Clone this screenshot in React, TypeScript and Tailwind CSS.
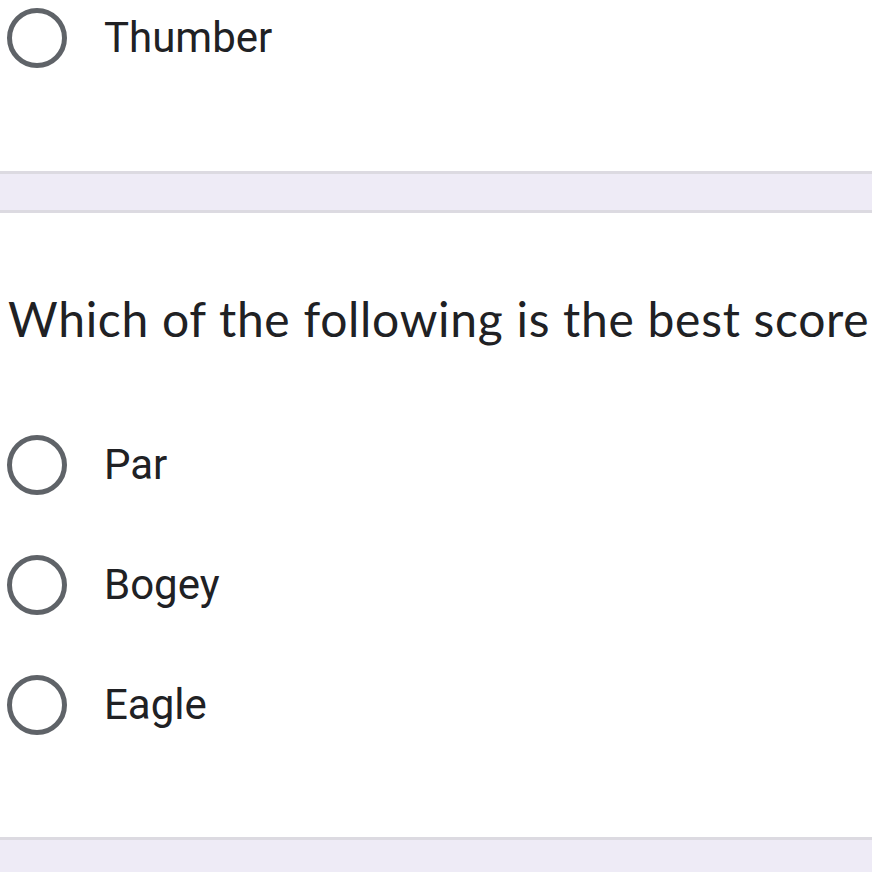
import { ReactNode } from 'react'

// Google Forms style multiple choice, cropped view

function Radio() {
  return (
    <span className="block w-[60px] h-[60px] shrink-0 rounded-full border-[5px] border-[#5f6368]" />
  )
}

function Option({ label }: { label: string }) {
  return (
    <div className="flex items-center h-[60px]">
      <div className="pl-[7px]">
        <Radio />
      </div>
      <span className="ml-[37px] text-[42px] leading-none text-[#202124] font-['Roboto',sans-serif]">
        {label}
      </span>
    </div>
  )
}

function Card({ children, className }: { children: ReactNode; className?: string }) {
  return <div className={`bg-white ${className ?? ''}`}>{children}</div>
}

function Divider() {
  return <div className="h-[42px] bg-[#eeebf6] border-y-[3px] border-[#dcdae1]" />
}

export default function App() {
  return (
    <div className="w-[872px] h-[872px] overflow-hidden bg-white">
      <Card className="pt-[8px] pb-[103px]">
        <Option label="Thumber" />
      </Card>
      <Divider />
      <Card className="pt-[76px] pb-[102px]">
        <p className="pl-[8px] whitespace-nowrap text-[48px] leading-[60px] tracking-[0.7px] text-[#202124] font-['Lato',sans-serif]">
          Which of the following is the best score
        </p>
        <div className="mt-[86px] flex flex-col gap-[60px]">
          <Option label="Par" />
          <Option label="Bogey" />
          <Option label="Eagle" />
        </div>
      </Card>
      <Divider />
    </div>
  )
}
